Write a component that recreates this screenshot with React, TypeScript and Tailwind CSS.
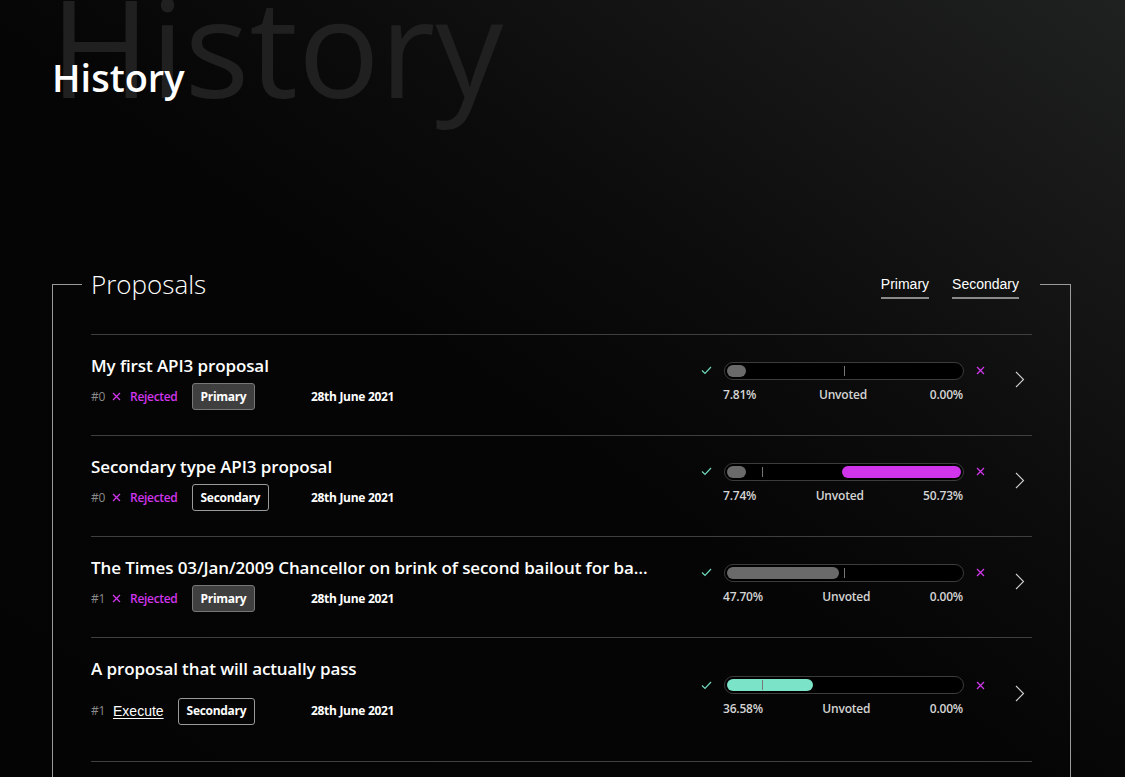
import React from 'react';

type Proposal = {
  id: number;
  title: string;
  status: 'rejected' | 'execute';
  type: 'Primary' | 'Secondary';
  date: string;
  forPct: number;
  againstPct: number;
};

const proposals: Proposal[] = [
  { id: 0, title: 'My first API3 proposal', status: 'rejected', type: 'Primary', date: '28th June 2021', forPct: 7.81, againstPct: 0 },
  { id: 0, title: 'Secondary type API3 proposal', status: 'rejected', type: 'Secondary', date: '28th June 2021', forPct: 7.74, againstPct: 50.73 },
  {
    id: 1,
    title: 'The Times 03/Jan/2009 Chancellor on brink of second bailout for banks',
    status: 'rejected',
    type: 'Primary',
    date: '28th June 2021',
    forPct: 47.7,
    againstPct: 0,
  },
  { id: 1, title: 'A proposal that will actually pass', status: 'execute', type: 'Secondary', date: '28th June 2021', forPct: 36.58, againstPct: 0 },
];

const Check = () => (
  <svg width="11" height="9" viewBox="0 0 11 9" fill="none">
    <path d="M1 4.5 L4 7.5 L10 1" stroke="#6fd8bd" strokeWidth="1.2" />
  </svg>
);

const Cross = ({ size = 9 }: { size?: number }) => (
  <svg width={size} height={size} viewBox="0 0 9 9" fill="none">
    <path d="M1 1 L8 8 M8 1 L1 8" stroke="#d035ec" strokeWidth="1.3" />
  </svg>
);

const Chevron = () => (
  <svg width="10" height="17" viewBox="0 0 10 17" fill="none">
    <path d="M1 1 L8.5 8.5 L1 16" stroke="#d0d0d0" strokeWidth="1.1" />
  </svg>
);

const VoteBar = ({ p }: { p: Proposal }) => {
  // quorum marker: 50% for primary, 15% for secondary
  const quorum = p.type === 'Primary' ? 50 : 15;
  const passing = p.status === 'execute';
  return (
    <div className="flex flex-col gap-[7px]">
      <div className="flex items-center gap-3">
        <Check />
        <div className="relative h-[18px] w-[240px] rounded-full border border-[#3c3c3c] bg-black">
          <div className="absolute inset-[2px]">
            {p.forPct > 0 && (
              <div
                className={`absolute left-0 top-0 h-full rounded-full ${passing ? 'bg-[#7be3c8]' : 'bg-[#6a6a6a]'}`}
                style={{ width: `${Math.max(p.forPct, 8)}%` }}
              />
            )}
            {p.againstPct > 0 && (
              <div
                className="absolute right-0 top-0 h-full rounded-full bg-[#d035ec]"
                style={{ width: `${p.againstPct}%` }}
              />
            )}
            <div
              className="absolute top-[1px] h-[10px] w-px bg-[#777]"
              style={{ left: `${quorum}%` }}
            />
          </div>
        </div>
        <Cross />
      </div>
      <div className="ml-[22px] flex w-[240px] justify-between text-[12px] font-semibold leading-4 tracking-[-0.2px] text-[#d4d4d4]">
        <span>{p.forPct.toFixed(2)}%</span>
        <span>Unvoted</span>
        <span>{p.againstPct.toFixed(2)}%</span>
      </div>
    </div>
  );
};

const Row = ({ p }: { p: Proposal }) => (
  <div className="flex items-center border-b border-[#3f3f3f] pt-[19px] pb-[25px]">
    <div className="flex flex-1 flex-col gap-[5px]">
      <div className="w-[565px] truncate text-[17px] font-semibold leading-6 tracking-[-0.1px] text-white">{p.title}</div>
      <div className="flex items-center text-[12px] tracking-[-0.3px]">
        <div className="flex w-[220px] items-center">
          <span className="text-[#8a8a8a]">#{p.id}</span>
          {p.status === 'rejected' ? (
            <>
              <span className="ml-[7px]">
                <Cross size={9} />
              </span>
              <span className="ml-[9px] font-semibold text-[#d035ec]">Rejected</span>
            </>
          ) : (
            <button className="ml-[8px] flex h-[50px] items-center font-['Liberation_Sans',Arial,sans-serif] text-[14px] tracking-normal text-white underline underline-offset-2">
              Execute
            </button>
          )}
          <span
            className={`ml-[14px] flex h-[27px] items-center rounded-[3px] border px-2 font-bold text-white ${
              p.type === 'Primary' ? 'border-[#777] bg-[#3f3f3f]' : 'border-[#9a9a9a] bg-transparent'
            }`}
          >
            {p.type}
          </span>
        </div>
        <span className="font-bold text-white">{p.date}</span>
      </div>
    </div>
    <VoteBar p={p} />
    <div className="mb-[6px] ml-[30px] mr-[7px]">
      <Chevron />
    </div>
  </div>
);

export default function App() {
  return (
    <div className="relative min-h-[777px] overflow-hidden bg-[linear-gradient(to_bottom_left,#1f2020_0%,#0c0c0c_35%,#050505_52%,#040404_100%)] font-['Open_Sans','Noto_Sans',sans-serif]">
      <header className="relative h-[269px] pl-[52px]">
        <div className="pointer-events-none absolute left-[50px] top-[-22px] select-none text-[136px] font-normal leading-none text-[#202020]">
          History
        </div>
        <h1 className="relative pt-[52px] text-[38px] font-semibold leading-[50px] text-white">History</h1>
      </header>

      <section className="ml-[52px] mt-[15px] flex w-[1019px] flex-col border-l border-r border-[#9a9a9a] pb-10">
        <div className="-mt-[15px] flex h-[30px] items-center">
          <div className="h-px w-[29px] bg-[#9a9a9a]" />
          <h2 className="ml-[9px] text-[26px] font-light leading-[30px] text-white">Proposals</h2>
          <div className="flex-1" />
          <nav className="flex items-center gap-[23px] font-['Liberation_Sans',Arial,sans-serif] text-[14px] text-white">
            <button className="border-b-2 border-[#8a8a8a] pb-[2px] pt-[4px]">Primary</button>
            <button className="border-b-2 border-[#8a8a8a] pb-[2px] pt-[4px]">Secondary</button>
          </nav>
          <div className="ml-[21px] h-px w-[30px] bg-[#9a9a9a]" />
        </div>

        <div className="mx-[38px] mt-[35px] border-t border-[#3f3f3f]">
          {proposals.map((p, i) => (
            <Row key={i} p={p} />
          ))}
        </div>
      </section>
    </div>
  );
}
